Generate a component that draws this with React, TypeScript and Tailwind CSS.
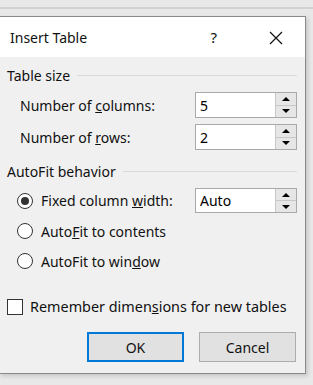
import React from 'react';

const font = { fontFamily: '"Noto Sans", "Open Sans", sans-serif' };

function Spin({ value }: { value: string }) {
  return (
    <div className="w-[102px] h-full flex border border-[#a9a9a9] bg-white">
      <div className="flex-1 flex items-center pl-[4px] text-[14px] text-black">{value}</div>
      <div className="w-[21px] flex flex-col border-l border-[#c8c8c8] bg-[#e6e6e6]">
        <div className="flex-1 flex items-center justify-center border-b border-[#c8c8c8]">
          <div className="w-0 h-0 border-l-[4px] border-r-[4px] border-b-[4px] border-l-transparent border-r-transparent border-b-black" />
        </div>
        <div className="flex-1 flex items-center justify-center">
          <div className="w-0 h-0 border-l-[4px] border-r-[4px] border-t-[4px] border-l-transparent border-r-transparent border-t-black" />
        </div>
      </div>
    </div>
  );
}

function Radio({ checked }: { checked?: boolean }) {
  return (
    <div className="w-[16px] h-[16px] rounded-full border border-[#333] bg-white flex items-center justify-center">
      {checked && <div className="w-[8px] h-[8px] rounded-full bg-[#333]" />}
    </div>
  );
}

function Group({ label }: { label: string }) {
  return (
    <div className="h-[20px] flex items-center pl-[7px] pr-[8px]">
      <span>{label}</span>
      <div className="flex-1 h-px bg-[#dadada] ml-[7px]" />
    </div>
  );
}

export default function App() {
  return (
    <div className="w-[313px] h-[385px] bg-[#e8e8e8] flex flex-col overflow-hidden text-[14px] text-[#111]" style={font}>
      <div className="h-[16px] shrink-0 pt-[7px]">
        <div className="h-[2px] bg-[#d2d2d2]" />
      </div>
      <div className="w-[307px] h-[358px] shrink-0 ml-[-1px] border border-[#8a8a8a] bg-[#f0f0f0] flex flex-col shadow-[2px_2px_4px_rgba(0,0,0,0.15)]">
        <div className="h-[40px] bg-white flex items-center pl-[10px] pr-[22px]">
          <span className="text-[14px]">Insert Table</span>
          <span className="ml-auto mr-[52px] text-[15px]">?</span>
          <svg width="14" height="14" viewBox="0 0 14 14" className="mt-[1px]">
            <path d="M1 1 L13 13 M13 1 L1 13" stroke="#111" strokeWidth="1.2" />
          </svg>
        </div>
        <div className="flex flex-col pt-[8px]">
          <Group label="Table size" />
          <div className="mt-[7px] h-[26px] flex items-center pl-[20px] pr-[8px]">
            <span className="flex-1">Number of <u>c</u>olumns:</span>
            <Spin value="5" />
          </div>
          <div className="mt-[6px] h-[26px] flex items-center pl-[20px] pr-[8px]">
            <span className="flex-1">Number of <u>r</u>ows:</span>
            <Spin value="2" />
          </div>
          <div className="mt-[11px]">
            <Group label="AutoFit behavior" />
          </div>
          <div className="mt-[7px] h-[25px] flex items-center pl-[17px] pr-[8px]">
            <Radio checked />
            <span className="flex-1 ml-[8px]">Fixed column <u>w</u>idth:</span>
            <Spin value="Auto" />
          </div>
          <div className="mt-[8px] h-[20px] flex items-center pl-[17px]">
            <Radio />
            <span className="ml-[8px]">Auto<u>F</u>it to contents</span>
          </div>
          <div className="mt-[10px] h-[20px] flex items-center pl-[17px]">
            <Radio />
            <span className="ml-[8px]">AutoFit to win<u>d</u>ow</span>
          </div>
          <div className="mt-[26px] h-[20px] flex items-center pl-[7px]">
            <div className="w-[16px] h-[16px] border border-[#333] bg-white" />
            <span className="ml-[7px] text-[14.4px]">Remember dimen<u>s</u>ions for new tables</span>
          </div>
          <div className="mt-[15px] h-[30px] flex justify-end gap-[15px] pr-[9px]">
            <button className="w-[97px] h-full border-2 border-[#0078d7] bg-[#e1e1e1] text-[14px]">OK</button>
            <button className="w-[97px] h-full border border-[#adadad] bg-[#e1e1e1] text-[14px]">Cancel</button>
          </div>
        </div>
      </div>
    </div>
  );
}
